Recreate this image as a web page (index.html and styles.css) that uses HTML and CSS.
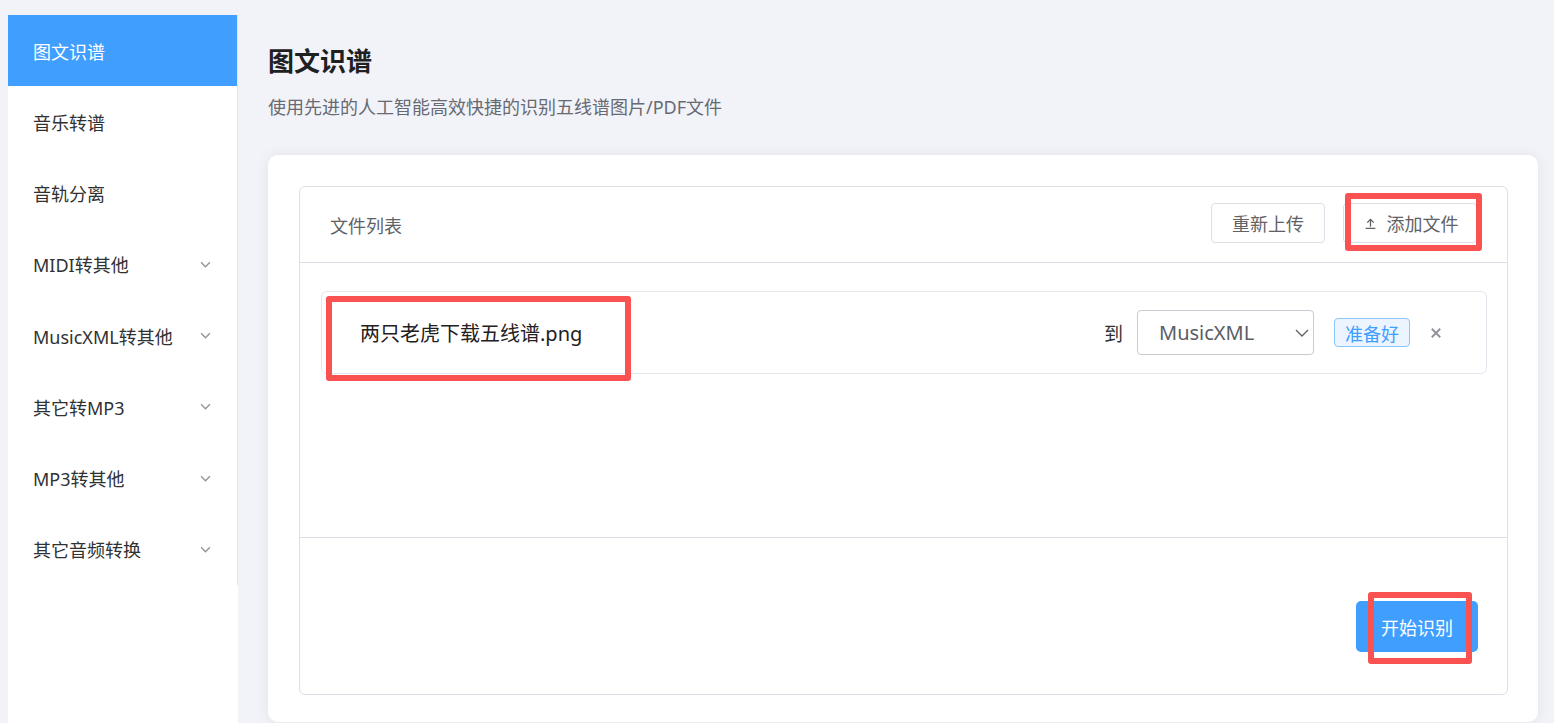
FILE: index.html
```html
<!DOCTYPE html>
<html lang="zh-CN">
<head>
<meta charset="utf-8">
<title>图文识谱</title>
<link rel="stylesheet" href="styles.css">
</head>
<body>
<div class="app">
  <aside class="aside">
    <ul class="menu">
      <li class="menu-item is-active"><span>图文识谱</span></li>
      <li class="menu-item"><span>音乐转谱</span></li>
      <li class="menu-item"><span>音轨分离</span></li>
      <li class="menu-item"><span>MIDI转其他</span><svg class="arrow" viewBox="0 0 10 6"><path d="M1 1l4 4 4-4"/></svg></li>
      <li class="menu-item"><span>MusicXML转其他</span><svg class="arrow" viewBox="0 0 10 6"><path d="M1 1l4 4 4-4"/></svg></li>
      <li class="menu-item"><span>其它转MP3</span><svg class="arrow" viewBox="0 0 10 6"><path d="M1 1l4 4 4-4"/></svg></li>
      <li class="menu-item"><span>MP3转其他</span><svg class="arrow" viewBox="0 0 10 6"><path d="M1 1l4 4 4-4"/></svg></li>
      <li class="menu-item"><span>其它音频转换</span><svg class="arrow" viewBox="0 0 10 6"><path d="M1 1l4 4 4-4"/></svg></li>
    </ul>
  </aside>

  <main class="main">
    <h1 class="page-title">图文识谱</h1>
    <p class="page-desc">使用先进的人工智能高效快捷的识别五线谱图片/PDF文件</p>

    <section class="card">
      <div class="panel">
        <div class="panel-head">
          <span class="panel-title">文件列表</span>
          <div class="actions">
            <button class="btn">重新上传</button>
            <button class="btn btn-upload">
              <svg class="upload-icon" viewBox="0 0 12 12"><path d="M6 9V2.5M3 5.2L6 2.2l3 3M1.5 10.5h9"/></svg>
              <span>添加文件</span>
              <span class="mark mark-upload"></span>
            </button>
          </div>
        </div>

        <div class="panel-body">
          <div class="file-row">
            <div class="file-name">
              两只老虎下载五线谱.png
              <span class="mark mark-name"></span>
            </div>
            <div class="file-ops">
              <span class="to">到</span>
              <div class="select">
                <span>MusicXML</span>
                <svg class="select-arrow" viewBox="0 0 14 8"><path d="M1 1l6 6 6-6"/></svg>
              </div>
              <span class="tag">准备好</span>
              <svg class="close" viewBox="0 0 10 10"><path d="M1.5 1.5l7 7M8.5 1.5l-7 7"/></svg>
            </div>
          </div>
        </div>

        <div class="panel-foot">
          <button class="btn-primary">
            开始识别
            <span class="mark mark-start"></span>
          </button>
        </div>
      </div>
    </section>
  </main>
</div>
</body>
</html>
```

FILE: styles.css
```css
* {
  box-sizing: border-box;
}

html, body {
  margin: 0;
  height: 100%;
}

body {
  background: #f2f3f8;
  font-family: "Noto Sans", "Noto Sans CJK SC", sans-serif;
  color: #303133;
  overflow: hidden;
}

.app {
  display: flex;
  height: 100vh;
  padding: 15px 0 0 8px;
}

/* ---------- sidebar ---------- */
.aside {
  width: 230px;
  flex-shrink: 0;
  background: #fff;
}

.menu {
  list-style: none;
  margin: 0;
  padding: 0;
  border-right: 1px solid #e3e5ea;
}

.menu-item {
  height: 71.25px;
  display: flex;
  align-items: center;
  justify-content: space-between;
  padding: 0 26px 0 25px;
  font-size: 18px;
  color: #303133;
}

.menu-item.is-active {
  background: #409eff;
  color: #fff;
}

.arrow {
  width: 11px;
  height: 7px;
  fill: none;
  stroke: #909399;
  stroke-width: 1.2;
}

/* ---------- main ---------- */
.main {
  flex: 1;
  display: flex;
  flex-direction: column;
  padding: 28px 16px 0 30px;
}

.page-title {
  margin: 0;
  font-size: 26px;
  line-height: 36px;
  font-weight: 700;
  color: #1f2022;
}

.page-desc {
  margin: 15px 0 0;
  font-size: 18px;
  line-height: 26px;
  color: #676a72;
}

.card {
  margin-top: 35px;
  height: 567px;
  background: #fff;
  border-radius: 10px;
  box-shadow: 0 0 14px rgba(30, 40, 80, 0.07);
  padding: 31px 30px 27px 31px;
}

.panel {
  height: 100%;
  border: 1px solid #dcdfe6;
  border-radius: 6px;
  display: flex;
  flex-direction: column;
}

.panel-head {
  height: 76px;
  flex-shrink: 0;
  display: flex;
  align-items: center;
  justify-content: space-between;
  padding: 0 30px 0 30px;
  border-bottom: 1px solid #dcdfe6;
}

.panel-title {
  font-size: 18px;
  color: #606266;
  margin-top: 1px;
}

.actions {
  display: flex;
  gap: 18px;
  margin-top: -3px;
}

.btn {
  position: relative;
  height: 40px;
  padding: 0 20px;
  border: 1px solid #dcdfe6;
  border-radius: 4px;
  background: #fff;
  font-family: inherit;
  font-size: 18px;
  color: #606266;
  display: flex;
  align-items: center;
  gap: 10px;
}

.btn-upload {
  width: 134px;
  justify-content: center;
  padding: 0 14px 0 16px;
}

.upload-icon {
  width: 13px;
  height: 13px;
  fill: none;
  stroke: #606266;
  stroke-width: 1.2;
}

/* red highlight frames */
.mark {
  position: absolute;
  border: 6px solid #fa5151;
  border-radius: 3px;
  pointer-events: none;
}

.mark-upload {
  left: 1px;
  right: -6px;
  top: -11px;
  bottom: -9px;
}

.mark-name {
  left: -34px;
  right: -49px;
  top: -22px;
  bottom: -34px;
}

.mark-start {
  left: 12px;
  right: 6px;
  top: -9px;
  bottom: -12px;
}

.panel-body {
  height: 275px;
  flex-shrink: 0;
  padding: 28px 20px 0 21px;
  border-bottom: 1px solid #dcdfe6;
}

.file-row {
  height: 83px;
  border: 1px solid #e4e7ed;
  border-radius: 6px;
  display: flex;
  align-items: center;
  justify-content: space-between;
  padding: 0 44px 0 38px;
}

.file-name {
  position: relative;
  font-size: 20px;
  color: #1f2022;
}

.file-ops {
  display: flex;
  align-items: center;
}

.to {
  font-size: 19px;
  color: #303133;
  margin-right: 14px;
}

.select {
  width: 177px;
  height: 45px;
  border: 1px solid #c8cbd1;
  border-radius: 4px;
  display: flex;
  align-items: center;
  justify-content: space-between;
  padding: 0 4px 0 21px;
  font-size: 20px;
  color: #5a5e66;
}

.select-arrow {
  width: 14px;
  height: 8px;
  fill: none;
  stroke: #606266;
  stroke-width: 1.3;
}

.tag {
  margin-left: 20px;
  height: 29px;
  width: 76px;
  display: flex;
  align-items: center;
  justify-content: center;
  background: #ecf5ff;
  border: 1px solid #8cc5ff;
  border-radius: 4px;
  font-size: 18px;
  color: #409eff;
}

.close {
  margin-left: 20px;
  width: 12px;
  height: 12px;
  fill: none;
  stroke: #909399;
  stroke-width: 1.6;
}

.panel-foot {
  flex: 1;
  display: flex;
  justify-content: flex-end;
  align-items: flex-start;
  padding: 63px 29px 0 0;
}

.btn-primary {
  position: relative;
  width: 122px;
  height: 51px;
  border: none;
  border-radius: 5px;
  background: #409eff;
  color: #fff;
  font-family: inherit;
  font-size: 18px;
}
```
